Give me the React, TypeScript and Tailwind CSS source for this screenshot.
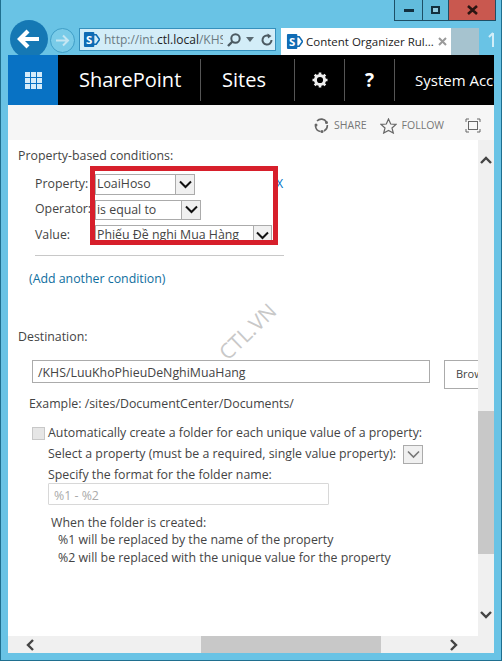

const SpIcon = ({ size = 18 }: { size?: number }) => (
  <svg width={size} height={size} viewBox="0 0 18 18" className="shrink-0">
    <path d="M10 4 L14 4 L17.5 9 L14 14 L10 14 Z" fill="none" stroke="#0f6cb5" strokeWidth="1.6" />
    <rect x="1" y="1" width="11" height="16" rx="1" fill="#0f6cb5" />
    <text x="6.5" y="13.5" textAnchor="middle" fontSize="12" fontWeight="700" fill="#fff" fontFamily="Open Sans, sans-serif">S</text>
  </svg>
);

const Chevron = ({ d, className = "" }: { d: string; className?: string }) => (
  <svg width="12" height="12" viewBox="0 0 12 12" className={className}>
    <path d={d} fill="none" stroke="#444" strokeWidth="2.4" />
  </svg>
);

const Select = ({ text, w, btn, h, clip }: { text: string; w: string; btn: string; h: string; clip?: boolean }) => (
  <div className={`flex ${w} ${h} border border-[#ababab] bg-white`}>
    <div className={`flex-1 pl-[1px] text-[#444] ${clip ? "overflow-hidden" : ""} whitespace-nowrap`}>{text}</div>
    <div className={`${btn} flex items-center justify-center bg-[#f0f0f0] border-l border-[#ababab]`}>
      <svg width="13" height="9" viewBox="0 0 13 9"><path d="M1 1.5 L6.5 7 L12 1.5" fill="none" stroke="#111" strokeWidth="2" /></svg>
    </div>
  </div>
);

export default function App() {
  return (
    <div className="relative w-[502px] h-[661px] overflow-hidden bg-[#69c3e5] border-x border-[#1f6f8f] font-['Open_Sans',sans-serif] text-[12.35px] text-[#444]">
      {/* Browser chrome */}
      <div className="h-[55px] flex flex-col">
        <div className="h-[28px] flex justify-end pr-[5px]">
          <div className="flex h-[21px] border border-t-0 border-[#1d4f66] bg-[#62bcdc]">
            <div className="w-[28px] flex items-center justify-center border-r border-[#1d4f66]">
              <div className="w-[10px] h-[3px] mt-[1px] bg-[#12303f]" />
            </div>
            <div className="w-[25px] flex items-center justify-center border-r-0">
              <div className="w-[9px] h-[8px] border-2 border-[#12303f] bg-[#8fcbe0]" />
            </div>
            <div className="w-[47px] flex items-center justify-center bg-[#c9584f] border-l border-[#1d4f66]">
              <svg width="11" height="10" viewBox="0 0 11 10"><path d="M1 1 L10 9 M10 1 L1 9" stroke="#2b1512" strokeWidth="2.6" /></svg>
            </div>
          </div>
        </div>
        <div className="h-[27px] flex items-start pl-[8px]">
          <div className="w-[38px] h-[38px] -mt-2 ml-[1px] rounded-full bg-[#1578b4] flex items-center justify-center shrink-0">
            <svg width="24" height="20" viewBox="0 0 24 20"><path d="M11 2 L3 10 L11 18 M3 10 H22" fill="none" stroke="#fff" strokeWidth="4.2" /></svg>
          </div>
          <div className="w-[25px] h-[25px] ml-[2px] rounded-full border border-[#3f9ec7] bg-[#79cbe8] flex items-center justify-center shrink-0">
            <svg width="15" height="13" viewBox="0 0 15 13"><path d="M8 1.5 L13 6.5 L8 11.5 M13 6.5 H1" fill="none" stroke="#c4e6f2" strokeWidth="2" /></svg>
          </div>
          <div className="w-[197px] h-[23px] ml-[4px] flex items-center border border-[#3590bd] bg-[#d3edf8] pl-[3px] shrink-0 overflow-hidden">
            <SpIcon size={17} />
            <div className="ml-[4px] w-[119px] overflow-hidden whitespace-nowrap text-[#6a7a82] text-[12px]">
              http://int.<span className="text-[#222]">ctl.local</span>/KHS
            </div>
            <svg width="16" height="16" viewBox="0 0 16 16" className="ml-[3px]"><circle cx="9.5" cy="6.5" r="4.2" fill="none" stroke="#4c5a62" strokeWidth="2" /><path d="M6.5 9.5 L2 14" stroke="#4c5a62" strokeWidth="2.4" /></svg>
            <svg width="8" height="5" viewBox="0 0 8 5" className="ml-[4px]"><path d="M0 0 H8 L4 5 Z" fill="#5a6a72" /></svg>
            <svg width="14" height="14" viewBox="0 0 14 14" className="ml-[6px]"><path d="M11.5 7 A4.5 4.5 0 1 1 9 3" fill="none" stroke="#4c5a62" strokeWidth="2" /><path d="M7.5 0.5 L11.5 3 L8 5.5 Z" fill="#4c5a62" /></svg>
          </div>
          <div className="w-[170px] h-[27px] ml-[5px] flex items-center bg-white pl-[5px] shrink-0">
            <SpIcon size={17} />
            <span className="ml-[3px] text-[11.5px] text-[#222] whitespace-nowrap">Content Organizer Rul...</span>
            <svg width="9" height="9" viewBox="0 0 9 9" className="ml-[4px]"><path d="M1 1 L8 8 M8 1 L1 8" stroke="#9a9a9a" strokeWidth="2" /></svg>
          </div>
          <div className="w-[28px] h-[27px] bg-[#a6c3cf] shrink-0" />
          <svg width="8" height="16" viewBox="0 0 8 16" className="ml-[9px] mt-[4px] shrink-0"><path d="M5 1 V15 M1 5 L5 1" fill="none" stroke="#d2eef8" strokeWidth="2" /></svg>
        </div>
      </div>

      {/* Page frame */}
      <div className="mx-[7px] w-[486px] relative z-10">
        {/* Suite bar */}
        <div className="h-[50px] flex items-stretch bg-black text-white overflow-hidden">
          <div className="w-[50px] bg-[#0872c4] flex items-center justify-center shrink-0">
            <div className="grid grid-cols-3 gap-[1px] w-[17px]">
              {[0, 1, 2, 3, 4, 5, 6, 7, 8].map((i) => <div key={i} className="w-[5px] h-[5px] bg-[#d5ecfa]" />)}
            </div>
          </div>
          <div className="w-[143px] my-[4px] flex items-center pl-[21px] border-r border-[#555] text-[20px] shrink-0">SharePoint</div>
          <div className="w-[94px] my-[4px] flex items-center pl-[21px] border-r border-[#555] text-[20px] shrink-0">Sites</div>
          <div className="w-[50px] my-[4px] flex items-center justify-center border-r border-[#555] shrink-0">
            <svg width="16" height="16" viewBox="0 0 16 16">
              <circle cx="8" cy="8" r="4.6" fill="none" stroke="#eee" strokeWidth="3" />
              <path d="M8 0.5 V3 M8 13 V15.5 M0.5 8 H3 M13 8 H15.5 M2.7 2.7 L4.5 4.5 M11.5 11.5 L13.3 13.3 M13.3 2.7 L11.5 4.5 M4.5 11.5 L2.7 13.3" stroke="#eee" strokeWidth="2.6" />
            </svg>
          </div>
          <div className="w-[50px] my-[4px] flex items-center justify-center border-r border-[#555] text-[19px] font-bold shrink-0">?</div>
          <div className="pl-[20px] flex items-center text-[15px] whitespace-nowrap">System Account</div>
        </div>

        {/* Share bar */}
        <div className="h-[35px] pt-[6px] bg-[#f6f6f6] flex items-center justify-end pr-[13px] text-[10.5px] text-[#777]">
          <svg width="15" height="15" viewBox="0 0 15 15"><path d="M3 3 A6 6 0 0 1 12.5 4 M13.3 7 A6 6 0 0 1 10 13 M6.5 13.5 A6 6 0 0 1 1.5 8" fill="none" stroke="#666" strokeWidth="1.6" /><circle cx="12.5" cy="4.5" r="1.5" fill="#666" /><circle cx="2" cy="7" r="1.5" fill="#666" /><circle cx="8" cy="13.5" r="1.5" fill="#666" /></svg>
          <span className="ml-[5px]">SHARE</span>
          <svg width="17" height="16" viewBox="0 0 17 16" className="ml-[13px]"><path d="M8.5 1 L10.7 6 L16 6.4 L12 10 L13.3 15 L8.5 12.4 L3.7 15 L5 10 L1 6.4 L6.3 6 Z" fill="none" stroke="#666" strokeWidth="1.2" /></svg>
          <span className="ml-[5px]">FOLLOW</span>
          <svg width="16" height="15" viewBox="0 0 16 15" className="ml-[21px]"><path d="M1 4 V1 H4 M12 1 H15 V4 M15 11 V14 H12 M4 14 H1 V11" fill="none" stroke="#666" /><rect x="3.5" y="3.5" width="9" height="8" fill="none" stroke="#666" /></svg>
        </div>

        {/* Body + vertical scrollbar */}
        <div className="h-[496px] flex bg-white">
          <div className="w-[470px] h-full overflow-hidden pt-[7px] pl-[10px] shrink-0">
            <div className="h-[18px] leading-[18px]">Property-based conditions:</div>
            <div className="mt-[6px] ml-[17px] w-[249px]">
              <div className="flex items-center h-[26px]">
                <div className="w-[60px] shrink-0">Property:</div>
                <Select text="LoaiHoso" w="w-[100px]" btn="w-[19px]" h="h-[21px]" />
                <a className="ml-[81px] text-[#0072c6]">X</a>
              </div>
              <div className="flex items-center h-[25px]">
                <div className="w-[60px] shrink-0">Operator:</div>
                <Select text="is equal to" w="w-[106px]" btn="w-[19px]" h="h-[20px]" />
              </div>
              <div className="flex items-center h-[25px] pt-[1px]">
                <div className="w-[60px] shrink-0">Value:</div>
                <Select text="Phiếu Đề nghị Mua Hàng" w="w-[177px]" btn="w-[18px]" h="h-[20px]" clip />
              </div>
              <div className="mt-[8px] border-t border-[#c8c8c8]" />
            </div>
            <div className="mt-[14px] ml-[11px] text-[#0f6e9e]">(Add another condition)</div>
            <div className="mt-[39px]">Destination:</div>
            <div className="mt-[14px] ml-[14px] flex items-start">
              <div className="w-[398px] h-[23px] border border-[#ababab] pl-[5px] leading-[24px] text-[#444] shrink-0">/KHS/LuuKhoPhieuDeNghiMuaHang</div>
              <div className="w-[60px] h-[29px] ml-[14px] border border-[#ababab] pl-[11px] leading-[26px] text-[11px] shrink-0">Browse...</div>
            </div>
            <div className="mt-[6px] ml-[11px]">Example: /sites/DocumentCenter/Documents/</div>
            <div className="mt-[10px] ml-[14px] flex items-center h-[20px]">
              <div className="w-[13px] h-[13px] border border-[#c8c8c8] bg-[#e6e6e6] shrink-0" />
              <span className="ml-[3px] whitespace-nowrap">Automatically create a folder for each unique value of a property:</span>
            </div>
            <div className="ml-[30px] flex items-center h-[21px]">
              <span className="whitespace-nowrap">Select a property (must be a required, single value property):</span>
              <div className="ml-[7px] w-[20px] h-[19px] border border-[#ababab] bg-[#f0f0f0] flex items-center justify-center">
                <svg width="13" height="9" viewBox="0 0 13 9"><path d="M1 1.5 L6.5 7 L12 1.5" fill="none" stroke="#777" strokeWidth="1.6" /></svg>
              </div>
            </div>
            <div className="ml-[30px] h-[18px] leading-[20px]">Specify the format for the folder name:</div>
            <div className="ml-[30px] w-[281px] h-[22px] border border-[#d8d8d8] pl-[5px] leading-[24px] text-[#aaa] rounded-[1px]">%1 - %2</div>
            <div className="ml-[33px] mt-[9px] leading-[17.5px]">
              <div>When the folder is created:</div>
              <div className="pl-[7px]">%1 will be replaced by the name of the property</div>
              <div className="pl-[7px]">%2 will be replaced with the unique value for the property</div>
            </div>
          </div>
          <div className="w-[16px] h-full bg-[#f0f0f0] flex flex-col items-center shrink-0">
            <Chevron d="M1 8 L6 3 L11 8" className="mt-[15px]" />
            <div className="mt-[244px] w-full h-[143px] bg-[#c8c8c8]" />
            <Chevron d="M1 4 L6 9 L11 4" className="mt-[54px]" />
          </div>
        </div>

        {/* Horizontal scrollbar */}
        <div className="h-[17px] bg-[#f0f0f0] flex items-center">
          <Chevron d="M8 1 L3 6 L8 11" className="ml-[17px]" />
          <div className="ml-[164px] w-[180px] h-full bg-[#c8c8c8]" />
          <Chevron d="M4 1 L9 6 L4 11" className="ml-[66px]" />
        </div>
      </div>

      {/* Watermark */}
      <div className="absolute left-[212px] top-[316px] -rotate-[44deg] text-[21px] text-[#c8c8c8] z-20 whitespace-nowrap">CTL.VN</div>
      {/* Red annotation */}
      <div className="absolute left-[89px] top-[166px] w-[188px] h-[79px] border-[5px] border-[#d71f2b] z-20" />
      {/* Bottom edge */}
      <div className="absolute left-0 right-0 bottom-0 h-[1px] bg-[#1f6f8f]" />
    </div>
  );
}
